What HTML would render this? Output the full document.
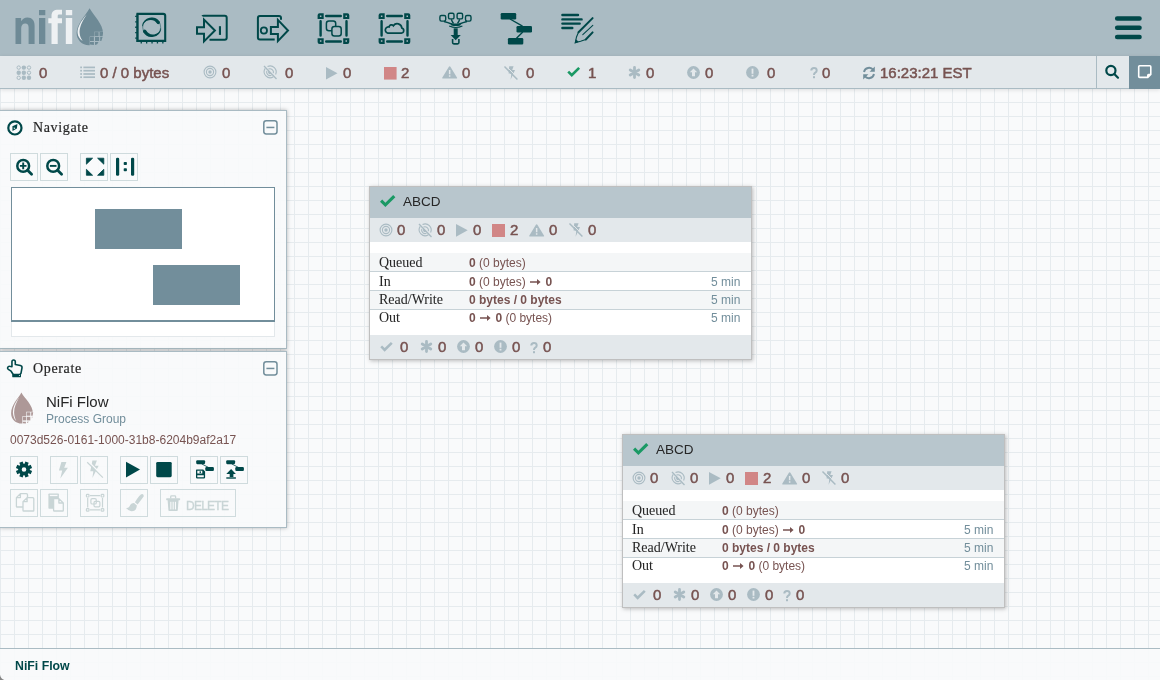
<!DOCTYPE html>
<html><head><meta charset="utf-8"><title>NiFi</title><style>
*{margin:0;padding:0;box-sizing:border-box}
html,body{width:1160px;height:680px;overflow:hidden;background:#f9fafb;font-family:'Liberation Sans', sans-serif}
.t{position:absolute;white-space:nowrap;will-change:transform}
.i{position:absolute;overflow:visible}
#canvas{position:absolute;left:0;top:88px;width:1160px;height:592px;background-color:#f9fafb;
 background-image:linear-gradient(to right,#e6ebee 1px,transparent 1px),linear-gradient(to bottom,#e6ebee 1px,transparent 1px);
 background-size:14px 14px;background-position:0 0}
#header{position:absolute;left:0;top:0;width:1160px;height:56px;background:#aabbc3}
#status{position:absolute;left:0;top:56px;width:1160px;height:33px;background:#e3e8eb;border-bottom:1px solid #aabbc3;box-shadow:0 1px 4px rgba(0,0,0,0.12)}
#srch{position:absolute;left:1096px;top:56px;width:33px;height:32px;border-left:1px solid #aabbc3;background:#e3e8eb}
#note{position:absolute;left:1129px;top:56px;width:31px;height:33px;background:#728e9b}
.panel{position:absolute;left:0;width:287px;background:rgba(249,250,251,0.92);border:1px solid #aabbc3;border-left:none;box-shadow:0 0 4px rgba(0,0,0,0.28)}
.btn{position:absolute;width:28px;height:28px;border:1px solid #cfdbdd;background:transparent}
#birdseye{position:absolute;left:11px;top:187px;width:264px;height:135px;background:#fff;border:1px solid #728e9b;border-bottom-width:2px}
.bk{position:absolute;background:#728e9b}
#bstrip{position:absolute;left:11px;top:322px;width:264px;height:15px;background:#fff;border:1px solid #e3e8eb;border-top:none}
.pg{position:absolute;width:383px;height:174px;background:#fff;border:1px solid rgba(0,0,0,0.25);box-shadow:1px 1px 4px rgba(0,0,0,0.25)}
.pgh{position:absolute;left:0;top:0;width:381px;height:31px;background:#b8c6cd}
.pgs{position:absolute;left:0;top:31px;width:381px;height:24px;background:#e3e8eb}
.row{position:absolute;left:0;width:381px;height:18px;background:#fff}
.rb{position:absolute;left:0;width:381px;height:1px;background:#c7d2d7}
.pgf{position:absolute;left:0;top:148px;width:381px;height:24px;background:#e3e8eb}
#bc{position:absolute;left:0;top:648px;width:1160px;height:32px;background:rgba(249,250,251,0.92);border-top:1px solid #aabbc3}
</style></head>
<body>
<div id="canvas"></div>
<div id="header"></div>
<svg class="i" style="left:0px;top:0px;" width="120" height="56" viewBox="0 0 120 56">
<path fill="#6e8a96" d="M15.5 18h5.6v3.2c1.4-2.3 3.6-3.7 6.3-3.7 4.7 0 7.2 3 7.2 8.2V44h-6V27.6c0-2.8-1.1-4.2-3.4-4.2-2.4 0-4 1.7-4 4.7V44h-5.7z"/>
<rect fill="#6e8a96" x="39" y="10" width="6.3" height="5.2"/>
<rect fill="#6e8a96" x="39" y="18" width="6.3" height="26"/>
<path fill="#eef1f3" d="M51.5 44V23.2h-3.2v-4.9h3.2v-2.4c0-4.4 2.4-6.2 6.8-6.2h3.7v4.9h-2.6c-1.4 0-1.7.6-1.7 1.9v1.8h4.3v4.9h-4.3V44z"/>
<rect fill="#eef1f3" x="65.8" y="10" width="6.4" height="5.2"/>
<rect fill="#eef1f3" x="65.8" y="18" width="6.4" height="26"/>
<clipPath id="dcl"><path clip-rule="evenodd" d="M0 0H120V56H0Z M94.2 31.8V36.6H89.7V47H106V31.8Z"/></clipPath>
<path clip-path="url(#dcl)" fill="#6e8a96" d="M89.6 8.3C85 16 76.6 24.5 76.6 33C76.6 39.8 82 45.2 89 45.2C96 45.2 103 39.8 103 33C103 24.5 94.2 16 89.6 8.3z"/>
<path fill="#eef1f3" d="M86.7 14.4C80.5 21.5 77.2 27.5 77.6 33C77.9 36.5 79.8 39.2 82.6 40.9C80.9 38.6 79.9 36 79.6 33C79.2 28 81.8 21.5 86.7 14.4Z"/>
<g fill="#6e8a96"><rect x="94.5" y="32.1" width="4.1" height="4.1"/><path d="M99.5 32.1H103V33.5L102.6 36.2H99.5Z"/><rect x="90" y="37" width="3.9" height="4"/><rect x="95" y="37" width="4.2" height="4"/><path d="M100.2 37H102.6L101.3 41H100.2Z"/><path d="M90 41.9H93.9V44.9L90 44.6Z"/><path d="M95 41.9H98.5L97.2 44.2L95 45Z"/></g>
</svg>
<svg class="i" style="left:130px;top:8px;" width="45" height="42" viewBox="0 0 45 42"><g fill="none" stroke="#004849">
<path stroke-width="2.1" d="M7.6 5.85 H33.2 a2 2 0 0 1 2 2 V32.85 H7.6 Z"/>
<path stroke-width="1.2" d="M7 5.5 V33.5 H35.5"/>
<path stroke-width="1.6" stroke-dasharray="1.3 4.1" d="M6 7.8 V34 M10.6 34.8 H35"/>
<circle cx="21.7" cy="19.2" r="9.0" stroke-width="0.55" stroke-opacity="0.85"/>
</g><g fill="#004849"><path d="M12.15 17.52 A9.7 9.7 0 0 1 29.65 13.64 L27.05 15.46 A8.0 8.0 0 0 0 12.62 18.66Z"/><circle cx="28.35" cy="14.55" r="1.59"/><path d="M31.25 20.88 A9.7 9.7 0 0 1 13.22 23.90 L16.00 22.36 A8.0 8.0 0 0 0 30.88 19.87Z"/><circle cx="14.61" cy="23.13" r="1.59"/></g></svg>
<svg class="i" style="left:190px;top:8px;" width="45" height="42" viewBox="0 0 45 42"><g fill="none" stroke="#004849" stroke-width="2" stroke-linejoin="miter">
<path d="M12.3 8.2 Q12.6 7.7 14 7.7 H34.7 Q36.7 7.7 36.7 9.7 V29.8 Q36.7 31.8 34.7 31.8 H19.5"/>
<path d="M7 19.2 H14 V11.6 L24.9 22.5 L14 33.4 V25.8 H7 Z"/>
</g><rect fill="#004849" x="28.9" y="18.2" width="2.1" height="8.7"/></svg>
<svg class="i" style="left:250px;top:8px;" width="45" height="42" viewBox="0 0 45 42"><g fill="none" stroke="#004849" stroke-width="2">
<path d="M31 11.7 V10 Q31 8 29 8 H9.9 Q7.9 8 7.9 10 V29.5 Q7.9 31.5 9.9 31.5 H24.7"/>
<circle cx="13.9" cy="22.5" r="3.1" stroke-width="1.8"/>
<path d="M20.9 19 H27.9 V11.9 L38 22.5 L27.9 33.1 V26 H20.9 Z"/>
</g></svg>
<svg class="i" style="left:312px;top:8px;" width="45" height="42" viewBox="0 0 45 42"><g fill="#004849">
<path d="M5.6 7.2 a2 2 0 0 1 2-2 H11.7 V11.1 H5.6 Z M7.9 7.5 v1.5 h1.5 v-1.5 z" fill-rule="evenodd"/>
<path d="M37.3 7.2 a2 2 0 0 0 -2-2 H31.2 V11.1 H37.3 Z M35 7.5 v1.5 h-1.5 v-1.5 z" fill-rule="evenodd"/>
<path d="M5.6 34.1 a2 2 0 0 0 2 2 H11.7 V30.2 H5.6 Z M7.9 32.3 v1.5 h1.5 v-1.5 z" fill-rule="evenodd"/>
<path d="M37.3 34.1 a2 2 0 0 1 -2 2 H31.2 V30.2 H37.3 Z M35 32.3 v1.5 h-1.5 v-1.5 z" fill-rule="evenodd"/>
</g><g stroke="#004849" stroke-width="2.4" stroke-linecap="round">
<path d="M14.2 8 H28.8 M14.2 33.5 H28.8 M8.6 13.2 V27.6 M34.5 13.2 V27.6"/></g><g fill="none" stroke="#004849" stroke-width="1.5">
<path d="M23.7 18.6 V15.6 a2.5 2.5 0 0 0 -2.5 -2.5 H16.9 a2.5 2.5 0 0 0 -2.5 2.5 V20.3 a2.5 2.5 0 0 0 2.5 2.5 H19.9"/>
<rect x="19.9" y="18.6" width="9.3" height="9.4" rx="2.5"/></g></svg>
<svg class="i" style="left:373px;top:8px;" width="45" height="42" viewBox="0 0 45 42"><g fill="#004849">
<path d="M5.6 7.2 a2 2 0 0 1 2-2 H11.7 V11.1 H5.6 Z M7.9 7.5 v1.5 h1.5 v-1.5 z" fill-rule="evenodd"/>
<path d="M37.3 7.2 a2 2 0 0 0 -2-2 H31.2 V11.1 H37.3 Z M35 7.5 v1.5 h-1.5 v-1.5 z" fill-rule="evenodd"/>
<path d="M5.6 34.1 a2 2 0 0 0 2 2 H11.7 V30.2 H5.6 Z M7.9 32.3 v1.5 h1.5 v-1.5 z" fill-rule="evenodd"/>
<path d="M37.3 34.1 a2 2 0 0 1 -2 2 H31.2 V30.2 H37.3 Z M35 32.3 v1.5 h-1.5 v-1.5 z" fill-rule="evenodd"/>
</g><g stroke="#004849" stroke-width="2.4" stroke-linecap="round">
<path d="M14.2 8 H28.8 M14.2 33.5 H28.8 M8.6 13.2 V27.6 M34.5 13.2 V27.6"/></g><path fill="none" stroke="#004849" stroke-width="1.7" d="M14.8 25.1 H28.4 a2.6 2.6 0 0 0 .4 -5.1 a4.6 4.6 0 0 0 -8.4 -2.2 a2.4 2.4 0 0 0 -4.3 1.2 a3.1 3.1 0 0 0 -1.3 6.1 z"/></svg>
<svg class="i" style="left:433px;top:8px;" width="45" height="42" viewBox="0 0 45 42"><g fill="none" stroke="#004849" stroke-width="1.4">
<rect x="6.9" y="7.5" width="5.8" height="5.6" rx="1.5"/>
<rect x="15.5" y="5.3" width="5.5" height="5.6" rx="1.5"/>
<rect x="24.1" y="5.3" width="5.5" height="5.6" rx="1.5"/>
<rect x="32.5" y="7.5" width="5.5" height="5.6" rx="1.5"/>
<path d="M11 13.5 Q15 14.5 18.5 16 M18.3 11.3 Q19 13.5 20.5 15.5 M26.7 11.3 Q26 13.5 24.5 15.5 M34 13.5 Q30 14.5 26.5 16"/>
<path d="M16.2 18 Q22.8 21 29.4 18" stroke-width="1.2"/>
<path d="M19.6 30.9 V34.6 Q19.6 35.9 20.9 35.9 H24.6 Q25.9 35.9 25.9 34.6 V30.9" stroke-width="1.6"/>
</g><g fill="#004849">
<path d="M17.4 14.9 Q22.8 16 28.2 14.9 L27.4 17.6 Q22.8 18.6 18.3 17.6 Z"/>
<rect x="20.7" y="20.3" width="4" height="7"/>
<path d="M17.6 26.9 H27.8 L22.7 32.3 Z"/></g></svg>
<svg class="i" style="left:494px;top:8px;" width="45" height="42" viewBox="0 0 45 42"><g fill="#004849">
<rect x="6.7" y="4.9" width="15.5" height="6.7" rx="1.3"/>
<rect x="22.5" y="17.9" width="15.5" height="6.7" rx="1.3"/>
<rect x="13.9" y="29.9" width="15.4" height="6.7" rx="1.3"/></g>
<path stroke="#004849" stroke-width="1.4" d="M16 11 L28.5 18.2 M28.8 24 L22.5 30.2"/></svg>
<svg class="i" style="left:555px;top:8px;" width="45" height="42" viewBox="0 0 45 42"><g stroke="#004849" stroke-width="2.4" stroke-linecap="round">
<path d="M7.4 7 H23 M7.4 11.4 H26.6 M7.4 15.6 H24.7 M7.4 20 H17.3"/></g>
<g fill="none" stroke="#004849" stroke-linecap="round">
<path stroke-width="2" d="M23.5 24.3 L37.6 10.1"/>
<path stroke-width="1.1" d="M27.8 26.7 L37.8 17.3"/>
<path stroke-width="2" d="M30.8 31.5 L37.6 24.4"/>
<path stroke-width="1.1" d="M23.5 24.3 L21.5 29 L20.3 34.7 L25.6 33.2 L30.8 31.5"/></g>
<path fill="#004849" d="M19.6 35.5 L20.8 31.3 L23.8 33.8 Z"/></svg>
<svg class="i" style="left:1110px;top:10px;" width="36" height="36" viewBox="0 0 36 36"><g stroke="#004849" stroke-width="4.6" stroke-linecap="round"><path d="M7.2 8.5 H29.5 M7.2 17.8 H29.5 M7.2 27 H29.5"/></g></svg>
<div id="status"></div>
<div id="srch"></div><div id="note"></div>
<svg class="i" style="left:1100px;top:62px;" width="24" height="20" viewBox="0 0 24 20"><g fill="none" stroke="#004849" stroke-width="2.2" stroke-linecap="round"><circle cx="10.9" cy="8.5" r="4.6"/><path d="M14.3 12 L18 15.7"/></g></svg>
<svg class="i" style="left:1134px;top:62px;" width="24" height="20" viewBox="0 0 24 20"><path fill="none" stroke="#fff" stroke-width="1.6" d="M5.7 3.8 H15.8 a1 1 0 0 1 1 1 V12.5 L13.8 15.4 H5.7 a1 1 0 0 1 -1 -1 V4.8 a1 1 0 0 1 1 -1 z M13.8 15.4 V13.2 a.7 .7 0 0 1 .7 -.7 H16.8"/></svg>
<svg class="i" style="left:12px;top:60px;" width="24" height="24" viewBox="0 0 24 24"><circle cx="6.7" cy="7.6" r="1.7" fill="none" stroke="#aabbc3" stroke-width="1"/><circle cx="11.850000000000001" cy="7.6" r="2.2" fill="#aabbc3"/><circle cx="17.0" cy="7.6" r="1.7" fill="none" stroke="#aabbc3" stroke-width="1"/><circle cx="6.7" cy="12.7" r="2.2" fill="#aabbc3"/><circle cx="11.850000000000001" cy="12.7" r="2.2" fill="#aabbc3"/><circle cx="17.0" cy="12.7" r="1.7" fill="none" stroke="#aabbc3" stroke-width="1"/><circle cx="6.7" cy="17.799999999999997" r="1.7" fill="none" stroke="#aabbc3" stroke-width="1"/><circle cx="11.850000000000001" cy="17.799999999999997" r="2.2" fill="#aabbc3"/><circle cx="17.0" cy="17.799999999999997" r="2.2" fill="#aabbc3"/></svg>
<div class="t" style="left:39.30px;top:65px;font-size:15px;line-height:15px;color:#775351;font-family:'Liberation Sans', sans-serif;font-weight:normal;-webkit-text-stroke:0.5px #775351;">0</div>
<svg class="i" style="left:74px;top:60px;" width="24" height="24" viewBox="0 0 24 24"><g fill="#aabbc3"><rect x="6.2" y="6.550000000000001" width="1.8" height="1.7"/><rect x="9.4" y="6.550000000000001" width="11.6" height="1.7"/><rect x="6.2" y="9.85" width="1.8" height="1.7"/><rect x="9.4" y="9.85" width="11.6" height="1.7"/><rect x="6.2" y="13.15" width="1.8" height="1.7"/><rect x="9.4" y="13.15" width="11.6" height="1.7"/><rect x="6.2" y="16.349999999999998" width="1.8" height="1.7"/><rect x="9.4" y="16.349999999999998" width="11.6" height="1.7"/></g></svg>
<div class="t" style="left:100.30px;top:65px;font-size:15px;line-height:15px;color:#775351;font-family:'Liberation Sans', sans-serif;font-weight:normal;-webkit-text-stroke:0.5px #775351;">0 / 0 bytes</div>
<svg class="i" style="left:198.0px;top:60.0px;" width="24.0" height="24.0" viewBox="0 0 24 24"><g fill="none" stroke="#aabbc3" stroke-width="1.1"><circle cx="12" cy="12" r="5.9"/><circle cx="12" cy="12" r="3.6"/></g><circle cx="12" cy="12" r="1.7" fill="#aabbc3"/></svg>
<div class="t" style="left:221.60px;top:65px;font-size:15px;line-height:15px;color:#775351;font-family:'Liberation Sans', sans-serif;font-weight:normal;-webkit-text-stroke:0.5px #775351;">0</div>
<svg class="i" style="left:258.0px;top:60.0px;" width="24.0" height="24.0" viewBox="0 0 24 24"><g fill="none" stroke="#aabbc3" stroke-width="1.1"><path d="M9.5 6.6 A6 6 0 0 1 17.6 14.5 M15.4 16.8 A6 6 0 0 1 7.2 8.4"/><path d="M10.5 9 A3.6 3.6 0 0 1 15.4 13.1 M13.5 15.3 A3.6 3.6 0 0 1 8.8 10.8"/><path d="M6 6 L18.5 19" stroke-width="1.3"/></g><path d="M10.6 10.8 L13.2 13.5 A1.7 1.7 0 0 1 10.6 10.8z" fill="#aabbc3"/></svg>
<div class="t" style="left:285.30px;top:65px;font-size:15px;line-height:15px;color:#775351;font-family:'Liberation Sans', sans-serif;font-weight:normal;-webkit-text-stroke:0.5px #775351;">0</div>
<svg class="i" style="left:326px;top:66.8px;" width="11.5" height="12.4" viewBox="0 0 11.5 12.4"><path fill="#aabbc3" d="M0 0 L11.5 6.2 L0 12.4 Z"/></svg>
<div class="t" style="left:342.90px;top:65px;font-size:15px;line-height:15px;color:#775351;font-family:'Liberation Sans', sans-serif;font-weight:normal;-webkit-text-stroke:0.5px #775351;">0</div>
<svg class="i" style="left:383.9px;top:66.7px;" width="12.6" height="12.6" viewBox="0 0 12.6 12.6"><rect fill="#d18686" width="12.6" height="12.6" rx="0"/></svg>
<div class="t" style="left:400.90px;top:65px;font-size:15px;line-height:15px;color:#775351;font-family:'Liberation Sans', sans-serif;font-weight:normal;-webkit-text-stroke:0.5px #775351;">2</div>
<svg class="i" style="left:442px;top:66.4px;" width="16" height="13" viewBox="0 0 16 13"><path fill="#aabbc3" d="M7.65 0.3 Q8.1 0.3 8.4 0.8 L15.1 11.8 Q15.4 12.5 14.6 12.5 H0.7 Q-0.1 12.5 0.2 11.8 L6.9 0.8 Q7.2 0.3 7.65 0.3Z M6.9 4 V8.2 H8.4 V4Z M6.9 9.3 V10.8 H8.4 V9.3Z" fill-rule="evenodd"/></svg>
<div class="t" style="left:462.10px;top:65px;font-size:15px;line-height:15px;color:#775351;font-family:'Liberation Sans', sans-serif;font-weight:normal;-webkit-text-stroke:0.5px #775351;">0</div>
<svg class="i" style="left:504px;top:65.8px;" width="14" height="14" viewBox="0 0 14 14"><path fill="#aabbc3" d="M5.2 0.3 H9.6 L8.2 4 H11 L6.6 13.7 L7.4 7.5 H4.6 Z"/><path stroke="#aabbc3" stroke-width="1.2" d="M0.6 0.6 L13.3 13.4"/><path stroke="#e3e8eb" stroke-width="1" d="M1.5 -0.5 L14.2 12.3"/><path stroke="#aabbc3" stroke-width="1.2" d="M0.6 0.6 L13.3 13.4"/></svg>
<div class="t" style="left:526.20px;top:65px;font-size:15px;line-height:15px;color:#775351;font-family:'Liberation Sans', sans-serif;font-weight:normal;-webkit-text-stroke:0.5px #775351;">0</div>
<svg class="i" style="left:567.3px;top:67.4px;overflow:visible" width="13.4" height="10" viewBox="0 0 16 12.5"><path fill="#1a9964" d="M0 6.9 L2.3 4.6 L5.6 7.9 L13.7 0 L16 2.3 L5.6 12.5 Z"/></svg>
<div class="t" style="left:587.70px;top:65px;font-size:15px;line-height:15px;color:#775351;font-family:'Liberation Sans', sans-serif;font-weight:normal;-webkit-text-stroke:0.5px #775351;">1</div>
<svg class="i" style="left:628px;top:66.4px;" width="13" height="13" viewBox="0 0 13 13"><g stroke="#aabbc3" stroke-width="2.8" stroke-linecap="round"><path d="M6.5 1.5 V11.5 M2.2 4 L10.8 9 M2.2 9 L10.8 4"/></g></svg>
<div class="t" style="left:646.20px;top:65px;font-size:15px;line-height:15px;color:#775351;font-family:'Liberation Sans', sans-serif;font-weight:normal;-webkit-text-stroke:0.5px #775351;">0</div>
<svg class="i" style="left:687.2px;top:66.2px;" width="13" height="13" viewBox="0 0 13 13"><circle cx="6.5" cy="6.5" r="6.4" fill="#aabbc3"/><path fill="#e3e8eb" d="M6.5 2.6 L10.2 6.3 H8 V10.3 H5 V6.3 H2.8 Z"/></svg>
<div class="t" style="left:705.00px;top:65px;font-size:15px;line-height:15px;color:#775351;font-family:'Liberation Sans', sans-serif;font-weight:normal;-webkit-text-stroke:0.5px #775351;">0</div>
<svg class="i" style="left:746px;top:66.2px;" width="13" height="13" viewBox="0 0 13 13"><circle cx="6.5" cy="6.5" r="6.4" fill="#aabbc3"/><rect x="5.6" y="2.6" width="1.8" height="5.2" fill="#e3e8eb"/><rect x="5.6" y="8.8" width="1.8" height="1.7" fill="#e3e8eb"/></svg>
<div class="t" style="left:767.30px;top:65px;font-size:15px;line-height:15px;color:#775351;font-family:'Liberation Sans', sans-serif;font-weight:normal;-webkit-text-stroke:0.5px #775351;">0</div>
<svg class="i" style="left:809.5px;top:66.6px;" width="8" height="12" viewBox="0 0 8 12"><path fill="none" stroke="#aabbc3" stroke-width="2" d="M1.3 3.6 Q1.3 1 4 1 Q6.7 1 6.7 3.4 Q6.7 4.9 5.3 5.7 Q4 6.5 4 8"/><rect x="3" y="9.2" width="2" height="2" fill="#aabbc3"/></svg>
<div class="t" style="left:821.90px;top:65px;font-size:15px;line-height:15px;color:#775351;font-family:'Liberation Sans', sans-serif;font-weight:normal;-webkit-text-stroke:0.5px #775351;">0</div>
<svg class="i" style="left:862.2px;top:65.7px;" width="14" height="14" viewBox="0 0 14 14"><g fill="none" stroke="#728e9b" stroke-width="1.9"><path d="M2 6 A5.2 5.2 0 0 1 11.3 4"/><path d="M12 8 A5.2 5.2 0 0 1 2.7 10"/></g><path fill="#728e9b" d="M12.8 0.6 V5.8 H7.6Z M1.2 13.4 V8.2 H6.4Z"/></svg>
<div class="t" style="left:880.40px;top:65px;font-size:15px;line-height:15px;color:#775351;font-family:'Liberation Sans', sans-serif;font-weight:normal;-webkit-text-stroke:0.5px #775351;">16:23:21 EST</div>
<div class="panel" style="top:110px;height:239px"></div>
<svg class="i" style="left:6px;top:119px;" width="18" height="18" viewBox="0 0 18 18"><circle cx="8.9" cy="8.9" r="6.6" fill="none" stroke="#004849" stroke-width="2.2"/><path fill="#004849" d="M6.4 7.2 L11.4 5.1 L10.9 9.5 L6.5 12 Z"/><path fill="#f9fafb" d="M7.8 8.3 L9.4 9.3 L7.8 10.2Z"/></svg>
<div class="t" style="left:33.00px;top:121px;font-size:14px;line-height:14px;color:#262626;font-family:'Liberation Serif', serif;font-weight:normal;letter-spacing:0.65px;-webkit-text-stroke:0.2px #262626;">Navigate</div>
<svg class="i" style="left:262.5px;top:119.8px;" width="15" height="15" viewBox="0 0 15 15"><rect x="0.8" y="0.8" width="13.2" height="13.2" rx="2.4" fill="none" stroke="#728e9b" stroke-width="1.5"/><rect x="3.4" y="6.7" width="8" height="1.5" fill="#728e9b"/></svg>
<div class="btn" style="left:10px;top:153px"></div>
<div class="btn" style="left:40px;top:153px"></div>
<div class="btn" style="left:80px;top:153px"></div>
<div class="btn" style="left:110px;top:153px"></div>
<svg class="i" style="left:10px;top:153px;" width="28" height="28" viewBox="0 0 28 28"><g fill="none" stroke="#004849" stroke-width="2.5"><circle cx="13.2" cy="12.9" r="5.9"/><path d="M17.6 17.3 L21.6 21.3" stroke-linecap="round" stroke-width="2.8"/></g><path stroke="#004849" stroke-width="1.9" d="M13.2 9.6 V16.2 M9.9 12.9 H16.5"/></svg>
<svg class="i" style="left:40px;top:153px;" width="28" height="28" viewBox="0 0 28 28"><g fill="none" stroke="#004849" stroke-width="2.5"><circle cx="13.2" cy="12.9" r="5.9"/><path d="M17.6 17.3 L21.6 21.3" stroke-linecap="round" stroke-width="2.8"/></g><path stroke="#004849" stroke-width="1.9" d="M9.9 12.9 H16.5"/></svg>
<svg class="i" style="left:80px;top:153px;" width="28" height="28" viewBox="0 0 28 28"><g fill="#004849" stroke="#004849" stroke-width="0.8" stroke-linejoin="round"><path d="M6.4 5.2 H12.6 L6.4 11.2Z M23.8 5.2 H17.6 L23.8 11.2Z M6.4 22.3 H12.6 L6.4 16.3Z M23.8 22.3 H17.6 L23.8 16.3Z"/></g></svg>
<svg class="i" style="left:110px;top:153px;" width="28" height="28" viewBox="0 0 28 28"><g fill="#004849"><rect x="6" y="4.7" width="3.2" height="18" rx="1.3"/><rect x="21" y="4.7" width="3.2" height="18" rx="1.3"/><rect x="13.7" y="9" width="3.2" height="3" rx="0.8"/><rect x="13.7" y="15.3" width="3.2" height="3" rx="0.8"/></g></svg>
<div id="birdseye"><div class="bk" style="left:83px;top:21px;width:87px;height:40px"></div><div class="bk" style="left:141px;top:77px;width:87px;height:40px"></div></div>
<div id="bstrip"></div>
<div class="panel" style="top:351px;height:177px"></div>
<svg class="i" style="left:5px;top:358px;" width="20" height="20" viewBox="0 0 20 20"><path fill="none" stroke="#004849" stroke-width="1.6" stroke-linejoin="round" stroke-linecap="round" d="M6.95 8.6 V3.8 Q6.95 2.06 8.6 2.06 Q10.3 2.06 10.3 3.8 V6.5 L15.4 7.5 Q17.2 7.9 17 9.8 L16 15.2 L15.4 16 M7.9 16 L6.1 13.2 L3.3 11.4 Q2.2 10.5 2.7 9.4 Q3.4 8.1 4.6 8.3 L6.95 8.6"/><rect x="7.2" y="15.8" width="8.8" height="3.5" rx="0.9" fill="#004849"/><circle cx="14.4" cy="17.5" r="0.55" fill="#f9fafb"/></svg>
<div class="t" style="left:33.00px;top:362px;font-size:14px;line-height:14px;color:#262626;font-family:'Liberation Serif', serif;font-weight:normal;letter-spacing:0.65px;-webkit-text-stroke:0.2px #262626;">Operate</div>
<svg class="i" style="left:262.5px;top:360.6px;" width="15" height="15" viewBox="0 0 15 15"><rect x="0.8" y="0.8" width="13.2" height="13.2" rx="2.4" fill="none" stroke="#728e9b" stroke-width="1.5"/><rect x="3.4" y="6.7" width="8" height="1.5" fill="#728e9b"/></svg>
<svg class="i" style="left:10px;top:392px;" width="26" height="34" viewBox="0 0 26 34"><clipPath id="dcl2"><path clip-rule="evenodd" d="M-5 -5H40V40H-5Z M16.2 19.8V24.3H12.3V40H40V19.8Z"/></clipPath><path clip-path="url(#dcl2)" fill="#ad9897" d="M11.4 0.5 C8.5 6 1.1 13 1.1 21.2 C1.1 27.2 5.8 31.6 11.8 31.6 C17.8 31.6 22.9 27.2 22.9 21.2 C22.9 13 14.3 6 11.4 0.5z"/><path fill="#f9fafb" d="M9.2 5.3 C5.5 10.3 2.7 15.3 2.9 20.4 C3.1 24.4 4.6 27.3 6.4 29.3 C5.2 27 4.2 24.2 4.1 20.6 C4 15.6 6.3 10.6 9.2 5.3Z"/><g fill="#ad9897"><rect x="16.7" y="20.3" width="3.6" height="3.4"/><path d="M21.2 20.3 H23.2 L22.6 23.7 H21.2Z"/><rect x="12.8" y="24.8" width="3.2" height="3.6"/><rect x="16.7" y="24.8" width="3.6" height="3.6"/><path d="M21.9 24.8 H22.5 L21.9 26.6Z"/><path d="M12.8 29.8 H15.9 V31.5 L12.8 31.2Z"/><path d="M17 29.8 H19 L17 31Z"/></g></svg>
<div class="t" style="left:46.20px;top:394px;font-size:15px;line-height:15px;color:#262626;font-family:'Liberation Sans', sans-serif;font-weight:normal;">NiFi Flow</div>
<div class="t" style="left:46.20px;top:413px;font-size:12px;line-height:12px;color:#728e9b;font-family:'Liberation Sans', sans-serif;font-weight:normal;">Process Group</div>
<div class="t" style="left:10.30px;top:434px;font-size:12px;line-height:12px;color:#775351;font-family:'Liberation Sans', sans-serif;font-weight:normal;">0073d526-0161-1000-31b8-6204b9af2a17</div>
<div class="btn" style="left:10px;top:456px"></div>
<div class="btn" style="left:50px;top:456px"></div>
<div class="btn" style="left:80px;top:456px"></div>
<div class="btn" style="left:120px;top:456px"></div>
<div class="btn" style="left:150px;top:456px"></div>
<div class="btn" style="left:190px;top:456px"></div>
<div class="btn" style="left:220px;top:456px"></div>
<div class="btn" style="left:10px;top:489px"></div>
<div class="btn" style="left:40px;top:489px"></div>
<div class="btn" style="left:80px;top:489px"></div>
<div class="btn" style="left:120px;top:489px"></div>
<div class="btn" style="left:160px;top:489px;width:76px"></div>
<svg class="i" style="left:10px;top:456px;" width="28" height="28" viewBox="0 0 28 28"><path fill="#004849" fill-rule="evenodd" d="M19.87 14.05 L22.08 14.91 L20.71 18.22 L18.54 17.27 L17.77 18.04 L18.72 20.21 L15.41 21.58 L14.55 19.37 L13.45 19.37 L12.59 21.58 L9.28 20.21 L10.23 18.04 L9.46 17.27 L7.29 18.22 L5.92 14.91 L8.13 14.05 L8.13 12.95 L5.92 12.09 L7.29 8.78 L9.46 9.73 L10.23 8.96 L9.28 6.79 L12.59 5.42 L13.45 7.63 L14.55 7.63 L15.41 5.42 L18.72 6.79 L17.77 8.96 L18.54 9.73 L20.71 8.78 L22.08 12.09 L19.87 12.95Z M16.3 13.5 A2.3 2.3 0 1 0 11.7 13.5 A2.3 2.3 0 1 0 16.3 13.5Z"/></svg>
<svg class="i" style="left:50px;top:456px;" width="28" height="28" viewBox="0 0 28 28"><path fill="#c9d5d6" d="M11.4 5.9 H16.4 L14.2 11.8 H17.9 L10.3 22.6 L12.2 14.6 H8.9 Z"/></svg>
<svg class="i" style="left:80px;top:456px;" width="28" height="28" viewBox="0 0 28 28"><path fill="#c9d5d6" d="M12.4 4.5 H16.9 L14.9 9.7 H18.6 L12.4 22 L13.3 15.3 H10.3 Z"/><path stroke="#f9fafb" stroke-width="1.4" d="M8.4 5.4 L23.6 20.8"/><path stroke="#c9d5d6" stroke-width="1.2" d="M7.2 6.3 L22.9 21.6"/></svg>
<svg class="i" style="left:120px;top:456px;" width="28" height="28" viewBox="0 0 28 28"><path fill="#004849" d="M6 5.7 L20 13.6 L6 21.5 Z"/></svg>
<svg class="i" style="left:150px;top:456px;" width="28" height="28" viewBox="0 0 28 28"><rect x="6.2" y="5.9" width="15.5" height="15.3" rx="1.4" fill="#004849"/></svg>
<svg class="i" style="left:190px;top:456px;" width="28" height="28" viewBox="0 0 28 28"><g fill="#004849"><rect x="6.2" y="4.2" width="8.9" height="4" rx="1.1"/><rect x="15.3" y="11.1" width="8.6" height="4" rx="1.1"/></g><path stroke="#004849" stroke-width="0.8" d="M11.8 8 L18.5 11.4"/><path fill="#004849" fill-rule="evenodd" d="M6.6 13.6 H13.2 L15.1 15.5 V21.6 Q15.1 22.4 14.3 22.4 H6.8 Q6 22.4 6 21.6 V14.2 Q6 13.6 6.6 13.6Z M7.3 14.8 V17.6 H12.3 V14.8Z M7.3 19.2 V21.3 H13.8 V19.2Z"/><rect x="9.6" y="15.3" width="1.3" height="1.8" fill="#004849"/></svg>
<svg class="i" style="left:220px;top:456px;" width="28" height="28" viewBox="0 0 28 28"><g fill="#004849"><rect x="6.2" y="4.2" width="8.9" height="4" rx="1.1"/><rect x="15.3" y="11.1" width="8.6" height="4" rx="1.1"/></g><path stroke="#004849" stroke-width="0.8" d="M11.8 8 L18.5 11.4"/><g fill="#004849"><path d="M11.1 13.1 L15.9 17.9 H13.4 V21 H9.7 V17.9 H6.3Z"/><rect x="6.3" y="21.3" width="9.6" height="1.4"/></g></svg>
<svg class="i" style="left:10px;top:489px;" width="28" height="28" viewBox="0 0 28 28"><g fill="#f9fafb" stroke="#c9d5d6" stroke-width="1.3" stroke-linejoin="round"><path d="M6.4 17.4 V8.6 L10.4 4.6 H16.4 Q17.5 4.6 17.5 5.7 V17.4 Q17.5 18 16.9 18 H7 Q6.4 18 6.4 17.4Z M6.4 8.6 H10.4 V4.6"/><path d="M13 21.4 V12.7 L17.1 8.6 H22.7 Q23.8 8.6 23.8 9.7 V21.4 Q23.8 22 23.2 22 H13.6 Q13 22 13 21.4Z M13 12.7 H17.1 V8.6"/></g></svg>
<svg class="i" style="left:40px;top:489px;" width="28" height="28" viewBox="0 0 28 28"><rect x="8.4" y="4.5" width="10.5" height="15.3" rx="0.8" fill="#c9d5d6"/><rect x="9.8" y="5.8" width="7.7" height="1.3" fill="#f9fafb"/><path fill="#f9fafb" stroke="#c9d5d6" stroke-width="1.3" stroke-linejoin="round" d="M13.6 9.6 H18.9 L23.3 14 V21.4 Q23.3 22 22.7 22 H14.2 Q13.6 22 13.6 21.4Z M18.9 9.6 V14 H23.3"/></svg>
<svg class="i" style="left:80px;top:489px;" width="28" height="28" viewBox="0 0 28 28"><g fill="none" stroke="#c9d5d6" stroke-width="1.2"><rect x="6.4" y="5.4" width="2.6" height="2.6" rx="0.8"/><rect x="21.2" y="5.4" width="2.6" height="2.6" rx="0.8"/><rect x="6.4" y="19.6" width="2.6" height="2.6" rx="0.8"/><rect x="21.2" y="19.6" width="2.6" height="2.6" rx="0.8"/><path d="M10 6.7 H20.2 M10 20.9 H20.2 M7.7 9 V18.6 M22.5 9 V18.6"/><rect x="10.9" y="9.6" width="5.4" height="5.4" rx="1.3"/><rect x="14" y="12.4" width="5.9" height="5.4" rx="1.3"/></g></svg>
<svg class="i" style="left:120px;top:489px;" width="28" height="28" viewBox="0 0 28 28"><path fill="#c9d5d6" d="M22.4 5.1 Q24.3 5.8 23.5 7.8 L17.6 15.6 L14.9 13.3 Q20.5 4.3 22.4 5.1z M14.1 14.1 L16.9 16.5 Q16.5 22.4 11.3 22.2 Q8.2 22 6.2 18.9 Q8.6 19.3 9.6 17.3 Q11 14 14.1 14.1z"/></svg>
<svg class="i" style="left:164px;top:491px;" width="18" height="24" viewBox="0 0 18 24"><g fill="#c9d5d6"><path d="M3.6 9.1 H14.6 L13.8 19.2 Q13.7 20 12.9 20 H5.3 Q4.5 20 4.4 19.2 Z"/><rect x="2.2" y="7.3" width="13.9" height="1.9" rx="0.4"/></g><path fill="none" stroke="#c9d5d6" stroke-width="1.3" d="M6.7 7.6 V5.7 Q6.7 4.9 7.5 4.9 H10.8 Q11.6 4.9 11.6 5.7 V7.6"/><g fill="#f9fafb"><rect x="6.3" y="10.8" width="1.1" height="7.6"/><rect x="8.6" y="10.8" width="1.1" height="7.6"/><rect x="10.9" y="10.8" width="1.1" height="7.6"/></g></svg>
<div class="t" style="left:185.60px;top:500px;font-size:12px;line-height:12px;color:#c9d5d6;font-family:'Liberation Sans', sans-serif;font-weight:normal;letter-spacing:-0.75px;-webkit-text-stroke:0.35px #c9d5d6;">DELETE</div>
<div class="pg" style="left:369px;top:186px"><div class="pgh"></div><div class="pgs"></div><div class="row" style="top:66px;background:#f4f6f7"></div><div class="rb" style="top:84px"></div><div class="row" style="top:85px"></div><div class="rb" style="top:103px"></div><div class="row" style="top:104px;background:#f4f6f7"></div><div class="rb" style="top:122px"></div><div class="pgf"></div></div><svg class="i" style="left:380.3px;top:195px;overflow:visible" width="15.4" height="12.2" viewBox="0 0 16 12.5"><path fill="#1a9964" d="M0 6.9 L2.3 4.6 L5.6 7.9 L13.7 0 L16 2.3 L5.6 12.5 Z"/></svg><div class="t" style="left:402.50px;top:195px;font-size:13.5px;line-height:13.5px;color:#262626;font-family:'Liberation Sans', sans-serif;font-weight:normal;">ABCD</div><svg class="i" style="left:373.9px;top:218.3px;" width="24.0" height="24.0" viewBox="0 0 24 24"><g fill="none" stroke="#aabbc3" stroke-width="1.1"><circle cx="12" cy="12" r="5.9"/><circle cx="12" cy="12" r="3.6"/></g><circle cx="12" cy="12" r="1.7" fill="#aabbc3"/></svg><div class="t" style="left:397.30px;top:222px;font-size:15px;line-height:15px;color:#775351;font-family:'Liberation Sans', sans-serif;font-weight:normal;-webkit-text-stroke:0.5px #775351;">0</div><svg class="i" style="left:412.7px;top:218.3px;" width="24.0" height="24.0" viewBox="0 0 24 24"><g fill="none" stroke="#aabbc3" stroke-width="1.1"><path d="M9.5 6.6 A6 6 0 0 1 17.6 14.5 M15.4 16.8 A6 6 0 0 1 7.2 8.4"/><path d="M10.5 9 A3.6 3.6 0 0 1 15.4 13.1 M13.5 15.3 A3.6 3.6 0 0 1 8.8 10.8"/><path d="M6 6 L18.5 19" stroke-width="1.3"/></g><path d="M10.6 10.8 L13.2 13.5 A1.7 1.7 0 0 1 10.6 10.8z" fill="#aabbc3"/></svg><div class="t" style="left:436.50px;top:222px;font-size:15px;line-height:15px;color:#775351;font-family:'Liberation Sans', sans-serif;font-weight:normal;-webkit-text-stroke:0.5px #775351;">0</div><svg class="i" style="left:455.9px;top:223.9px;" width="11.7" height="12.7" viewBox="0 0 11.7 12.7"><path fill="#aabbc3" d="M0 0 L11.7 6.35 L0 12.7 Z"/></svg><div class="t" style="left:472.70px;top:222px;font-size:15px;line-height:15px;color:#775351;font-family:'Liberation Sans', sans-serif;font-weight:normal;-webkit-text-stroke:0.5px #775351;">0</div><svg class="i" style="left:492px;top:223.9px;" width="13" height="13" viewBox="0 0 13 13"><rect fill="#d18686" width="13" height="13" rx="0"/></svg><div class="t" style="left:509.60px;top:222px;font-size:15px;line-height:15px;color:#775351;font-family:'Liberation Sans', sans-serif;font-weight:normal;-webkit-text-stroke:0.5px #775351;">2</div><svg class="i" style="left:529px;top:223.6px;" width="16" height="13" viewBox="0 0 16 13"><path fill="#aabbc3" d="M7.65 0.3 Q8.1 0.3 8.4 0.8 L15.1 11.8 Q15.4 12.5 14.6 12.5 H0.7 Q-0.1 12.5 0.2 11.8 L6.9 0.8 Q7.2 0.3 7.65 0.3Z M6.9 4 V8.2 H8.4 V4Z M6.9 9.3 V10.8 H8.4 V9.3Z" fill-rule="evenodd"/></svg><div class="t" style="left:549.00px;top:222px;font-size:15px;line-height:15px;color:#775351;font-family:'Liberation Sans', sans-serif;font-weight:normal;-webkit-text-stroke:0.5px #775351;">0</div><svg class="i" style="left:569.2px;top:223.2px;" width="14" height="14" viewBox="0 0 14 14"><path fill="#aabbc3" d="M5.2 0.3 H9.6 L8.2 4 H11 L6.6 13.7 L7.4 7.5 H4.6 Z"/><path stroke="#aabbc3" stroke-width="1.2" d="M0.6 0.6 L13.3 13.4"/><path stroke="#e3e8eb" stroke-width="1" d="M1.5 -0.5 L14.2 12.3"/><path stroke="#aabbc3" stroke-width="1.2" d="M0.6 0.6 L13.3 13.4"/></svg><div class="t" style="left:588.30px;top:222px;font-size:15px;line-height:15px;color:#775351;font-family:'Liberation Sans', sans-serif;font-weight:normal;-webkit-text-stroke:0.5px #775351;">0</div><div class="t" style="left:379.30px;top:256px;font-size:14px;line-height:14px;color:#262626;font-family:'Liberation Serif', serif;font-weight:normal;-webkit-text-stroke:0.05px #262626;">Queued</div><div class="t" style="left:379.30px;top:275px;font-size:14px;line-height:14px;color:#262626;font-family:'Liberation Serif', serif;font-weight:normal;-webkit-text-stroke:0.05px #262626;">In</div><div class="t" style="left:379.30px;top:293px;font-size:14px;line-height:14px;color:#262626;font-family:'Liberation Serif', serif;font-weight:normal;-webkit-text-stroke:0.05px #262626;">Read/Write</div><div class="t" style="left:379.30px;top:311px;font-size:14px;line-height:14px;color:#262626;font-family:'Liberation Serif', serif;font-weight:normal;-webkit-text-stroke:0.05px #262626;">Out</div><div class="t" style="left:468.60px;top:257px;font-size:12px;line-height:12px;color:#775351;font-family:'Liberation Sans', sans-serif;font-weight:normal;"><b>0</b> (0 bytes)</div><div class="t" style="left:468.60px;top:276px;font-size:12px;line-height:12px;color:#775351;font-family:'Liberation Sans', sans-serif;font-weight:normal;"><b>0</b> (0 bytes) <svg width="11" height="8" viewBox="0 0 11 8" style="display:inline-block;vertical-align:0px;margin:0 1px"><path fill="#775351" d="M0 3.3 H7 V1 L10.6 4 L7 7 V4.7 H0Z"/></svg> <b>0</b></div><div class="t" style="left:468.60px;top:294px;font-size:12px;line-height:12px;color:#775351;font-family:'Liberation Sans', sans-serif;font-weight:normal;"><b>0 bytes / 0 bytes</b></div><div class="t" style="left:468.60px;top:312px;font-size:12px;line-height:12px;color:#775351;font-family:'Liberation Sans', sans-serif;font-weight:normal;"><b>0</b> <svg width="11" height="8" viewBox="0 0 11 8" style="display:inline-block;vertical-align:0px;margin:0 1px"><path fill="#775351" d="M0 3.3 H7 V1 L10.6 4 L7 7 V4.7 H0Z"/></svg> <b>0</b> (0 bytes)</div><div class="t" style="right:419.5px;top:276px;font-size:12px;line-height:12px;color:#728e9b;font-family:'Liberation Sans', sans-serif">5 min</div><div class="t" style="right:419.5px;top:294px;font-size:12px;line-height:12px;color:#728e9b;font-family:'Liberation Sans', sans-serif">5 min</div><div class="t" style="right:419.5px;top:312px;font-size:12px;line-height:12px;color:#728e9b;font-family:'Liberation Sans', sans-serif">5 min</div><svg class="i" style="left:380px;top:342px;overflow:visible" width="13" height="9.7" viewBox="0 0 16 12.5"><path fill="#aabbc3" d="M0 6.9 L2.3 4.6 L5.6 7.9 L13.7 0 L16 2.3 L5.6 12.5 Z"/></svg><div class="t" style="left:399.60px;top:339px;font-size:15px;line-height:15px;color:#775351;font-family:'Liberation Sans', sans-serif;font-weight:normal;-webkit-text-stroke:0.5px #775351;">0</div><svg class="i" style="left:419.5px;top:340.4px;" width="13" height="13" viewBox="0 0 13 13"><g stroke="#aabbc3" stroke-width="2.8" stroke-linecap="round"><path d="M6.5 1.5 V11.5 M2.2 4 L10.8 9 M2.2 9 L10.8 4"/></g></svg><div class="t" style="left:437.50px;top:339px;font-size:15px;line-height:15px;color:#775351;font-family:'Liberation Sans', sans-serif;font-weight:normal;-webkit-text-stroke:0.5px #775351;">0</div><svg class="i" style="left:457px;top:340.2px;" width="13" height="13" viewBox="0 0 13 13"><circle cx="6.5" cy="6.5" r="6.4" fill="#aabbc3"/><path fill="#e3e8eb" d="M6.5 2.6 L10.2 6.3 H8 V10.3 H5 V6.3 H2.8 Z"/></svg><div class="t" style="left:474.70px;top:339px;font-size:15px;line-height:15px;color:#775351;font-family:'Liberation Sans', sans-serif;font-weight:normal;-webkit-text-stroke:0.5px #775351;">0</div><svg class="i" style="left:494px;top:340px;" width="13" height="13" viewBox="0 0 13 13"><circle cx="6.5" cy="6.5" r="6.4" fill="#aabbc3"/><rect x="5.6" y="2.6" width="1.8" height="5.2" fill="#e3e8eb"/><rect x="5.6" y="8.8" width="1.8" height="1.7" fill="#e3e8eb"/></svg><div class="t" style="left:512.00px;top:339px;font-size:15px;line-height:15px;color:#775351;font-family:'Liberation Sans', sans-serif;font-weight:normal;-webkit-text-stroke:0.5px #775351;">0</div><svg class="i" style="left:530px;top:342px;" width="8" height="12" viewBox="0 0 8 12"><path fill="none" stroke="#aabbc3" stroke-width="2" d="M1.3 3.6 Q1.3 1 4 1 Q6.7 1 6.7 3.4 Q6.7 4.9 5.3 5.7 Q4 6.5 4 8"/><rect x="3" y="9.2" width="2" height="2" fill="#aabbc3"/></svg><div class="t" style="left:543.10px;top:339px;font-size:15px;line-height:15px;color:#775351;font-family:'Liberation Sans', sans-serif;font-weight:normal;-webkit-text-stroke:0.5px #775351;">0</div>
<div class="pg" style="left:622px;top:434px"><div class="pgh"></div><div class="pgs"></div><div class="row" style="top:66px;background:#f4f6f7"></div><div class="rb" style="top:84px"></div><div class="row" style="top:85px"></div><div class="rb" style="top:103px"></div><div class="row" style="top:104px;background:#f4f6f7"></div><div class="rb" style="top:122px"></div><div class="pgf"></div></div><svg class="i" style="left:633.3px;top:443px;overflow:visible" width="15.4" height="12.2" viewBox="0 0 16 12.5"><path fill="#1a9964" d="M0 6.9 L2.3 4.6 L5.6 7.9 L13.7 0 L16 2.3 L5.6 12.5 Z"/></svg><div class="t" style="left:655.50px;top:443px;font-size:13.5px;line-height:13.5px;color:#262626;font-family:'Liberation Sans', sans-serif;font-weight:normal;">ABCD</div><svg class="i" style="left:626.9px;top:466.3px;" width="24.0" height="24.0" viewBox="0 0 24 24"><g fill="none" stroke="#aabbc3" stroke-width="1.1"><circle cx="12" cy="12" r="5.9"/><circle cx="12" cy="12" r="3.6"/></g><circle cx="12" cy="12" r="1.7" fill="#aabbc3"/></svg><div class="t" style="left:650.30px;top:470px;font-size:15px;line-height:15px;color:#775351;font-family:'Liberation Sans', sans-serif;font-weight:normal;-webkit-text-stroke:0.5px #775351;">0</div><svg class="i" style="left:665.7px;top:466.3px;" width="24.0" height="24.0" viewBox="0 0 24 24"><g fill="none" stroke="#aabbc3" stroke-width="1.1"><path d="M9.5 6.6 A6 6 0 0 1 17.6 14.5 M15.4 16.8 A6 6 0 0 1 7.2 8.4"/><path d="M10.5 9 A3.6 3.6 0 0 1 15.4 13.1 M13.5 15.3 A3.6 3.6 0 0 1 8.8 10.8"/><path d="M6 6 L18.5 19" stroke-width="1.3"/></g><path d="M10.6 10.8 L13.2 13.5 A1.7 1.7 0 0 1 10.6 10.8z" fill="#aabbc3"/></svg><div class="t" style="left:689.50px;top:470px;font-size:15px;line-height:15px;color:#775351;font-family:'Liberation Sans', sans-serif;font-weight:normal;-webkit-text-stroke:0.5px #775351;">0</div><svg class="i" style="left:708.9px;top:471.9px;" width="11.7" height="12.7" viewBox="0 0 11.7 12.7"><path fill="#aabbc3" d="M0 0 L11.7 6.35 L0 12.7 Z"/></svg><div class="t" style="left:725.70px;top:470px;font-size:15px;line-height:15px;color:#775351;font-family:'Liberation Sans', sans-serif;font-weight:normal;-webkit-text-stroke:0.5px #775351;">0</div><svg class="i" style="left:745px;top:471.9px;" width="13" height="13" viewBox="0 0 13 13"><rect fill="#d18686" width="13" height="13" rx="0"/></svg><div class="t" style="left:762.60px;top:470px;font-size:15px;line-height:15px;color:#775351;font-family:'Liberation Sans', sans-serif;font-weight:normal;-webkit-text-stroke:0.5px #775351;">2</div><svg class="i" style="left:782px;top:471.6px;" width="16" height="13" viewBox="0 0 16 13"><path fill="#aabbc3" d="M7.65 0.3 Q8.1 0.3 8.4 0.8 L15.1 11.8 Q15.4 12.5 14.6 12.5 H0.7 Q-0.1 12.5 0.2 11.8 L6.9 0.8 Q7.2 0.3 7.65 0.3Z M6.9 4 V8.2 H8.4 V4Z M6.9 9.3 V10.8 H8.4 V9.3Z" fill-rule="evenodd"/></svg><div class="t" style="left:802.00px;top:470px;font-size:15px;line-height:15px;color:#775351;font-family:'Liberation Sans', sans-serif;font-weight:normal;-webkit-text-stroke:0.5px #775351;">0</div><svg class="i" style="left:822.2px;top:471.2px;" width="14" height="14" viewBox="0 0 14 14"><path fill="#aabbc3" d="M5.2 0.3 H9.6 L8.2 4 H11 L6.6 13.7 L7.4 7.5 H4.6 Z"/><path stroke="#aabbc3" stroke-width="1.2" d="M0.6 0.6 L13.3 13.4"/><path stroke="#e3e8eb" stroke-width="1" d="M1.5 -0.5 L14.2 12.3"/><path stroke="#aabbc3" stroke-width="1.2" d="M0.6 0.6 L13.3 13.4"/></svg><div class="t" style="left:841.30px;top:470px;font-size:15px;line-height:15px;color:#775351;font-family:'Liberation Sans', sans-serif;font-weight:normal;-webkit-text-stroke:0.5px #775351;">0</div><div class="t" style="left:632.30px;top:504px;font-size:14px;line-height:14px;color:#262626;font-family:'Liberation Serif', serif;font-weight:normal;-webkit-text-stroke:0.05px #262626;">Queued</div><div class="t" style="left:632.30px;top:523px;font-size:14px;line-height:14px;color:#262626;font-family:'Liberation Serif', serif;font-weight:normal;-webkit-text-stroke:0.05px #262626;">In</div><div class="t" style="left:632.30px;top:541px;font-size:14px;line-height:14px;color:#262626;font-family:'Liberation Serif', serif;font-weight:normal;-webkit-text-stroke:0.05px #262626;">Read/Write</div><div class="t" style="left:632.30px;top:559px;font-size:14px;line-height:14px;color:#262626;font-family:'Liberation Serif', serif;font-weight:normal;-webkit-text-stroke:0.05px #262626;">Out</div><div class="t" style="left:721.60px;top:505px;font-size:12px;line-height:12px;color:#775351;font-family:'Liberation Sans', sans-serif;font-weight:normal;"><b>0</b> (0 bytes)</div><div class="t" style="left:721.60px;top:524px;font-size:12px;line-height:12px;color:#775351;font-family:'Liberation Sans', sans-serif;font-weight:normal;"><b>0</b> (0 bytes) <svg width="11" height="8" viewBox="0 0 11 8" style="display:inline-block;vertical-align:0px;margin:0 1px"><path fill="#775351" d="M0 3.3 H7 V1 L10.6 4 L7 7 V4.7 H0Z"/></svg> <b>0</b></div><div class="t" style="left:721.60px;top:542px;font-size:12px;line-height:12px;color:#775351;font-family:'Liberation Sans', sans-serif;font-weight:normal;"><b>0 bytes / 0 bytes</b></div><div class="t" style="left:721.60px;top:560px;font-size:12px;line-height:12px;color:#775351;font-family:'Liberation Sans', sans-serif;font-weight:normal;"><b>0</b> <svg width="11" height="8" viewBox="0 0 11 8" style="display:inline-block;vertical-align:0px;margin:0 1px"><path fill="#775351" d="M0 3.3 H7 V1 L10.6 4 L7 7 V4.7 H0Z"/></svg> <b>0</b> (0 bytes)</div><div class="t" style="right:166.5px;top:524px;font-size:12px;line-height:12px;color:#728e9b;font-family:'Liberation Sans', sans-serif">5 min</div><div class="t" style="right:166.5px;top:542px;font-size:12px;line-height:12px;color:#728e9b;font-family:'Liberation Sans', sans-serif">5 min</div><div class="t" style="right:166.5px;top:560px;font-size:12px;line-height:12px;color:#728e9b;font-family:'Liberation Sans', sans-serif">5 min</div><svg class="i" style="left:633px;top:590px;overflow:visible" width="13" height="9.7" viewBox="0 0 16 12.5"><path fill="#aabbc3" d="M0 6.9 L2.3 4.6 L5.6 7.9 L13.7 0 L16 2.3 L5.6 12.5 Z"/></svg><div class="t" style="left:652.60px;top:587px;font-size:15px;line-height:15px;color:#775351;font-family:'Liberation Sans', sans-serif;font-weight:normal;-webkit-text-stroke:0.5px #775351;">0</div><svg class="i" style="left:672.5px;top:588.4px;" width="13" height="13" viewBox="0 0 13 13"><g stroke="#aabbc3" stroke-width="2.8" stroke-linecap="round"><path d="M6.5 1.5 V11.5 M2.2 4 L10.8 9 M2.2 9 L10.8 4"/></g></svg><div class="t" style="left:690.50px;top:587px;font-size:15px;line-height:15px;color:#775351;font-family:'Liberation Sans', sans-serif;font-weight:normal;-webkit-text-stroke:0.5px #775351;">0</div><svg class="i" style="left:710px;top:588.2px;" width="13" height="13" viewBox="0 0 13 13"><circle cx="6.5" cy="6.5" r="6.4" fill="#aabbc3"/><path fill="#e3e8eb" d="M6.5 2.6 L10.2 6.3 H8 V10.3 H5 V6.3 H2.8 Z"/></svg><div class="t" style="left:727.70px;top:587px;font-size:15px;line-height:15px;color:#775351;font-family:'Liberation Sans', sans-serif;font-weight:normal;-webkit-text-stroke:0.5px #775351;">0</div><svg class="i" style="left:747px;top:588px;" width="13" height="13" viewBox="0 0 13 13"><circle cx="6.5" cy="6.5" r="6.4" fill="#aabbc3"/><rect x="5.6" y="2.6" width="1.8" height="5.2" fill="#e3e8eb"/><rect x="5.6" y="8.8" width="1.8" height="1.7" fill="#e3e8eb"/></svg><div class="t" style="left:765.00px;top:587px;font-size:15px;line-height:15px;color:#775351;font-family:'Liberation Sans', sans-serif;font-weight:normal;-webkit-text-stroke:0.5px #775351;">0</div><svg class="i" style="left:783px;top:590px;" width="8" height="12" viewBox="0 0 8 12"><path fill="none" stroke="#aabbc3" stroke-width="2" d="M1.3 3.6 Q1.3 1 4 1 Q6.7 1 6.7 3.4 Q6.7 4.9 5.3 5.7 Q4 6.5 4 8"/><rect x="3" y="9.2" width="2" height="2" fill="#aabbc3"/></svg><div class="t" style="left:796.10px;top:587px;font-size:15px;line-height:15px;color:#775351;font-family:'Liberation Sans', sans-serif;font-weight:normal;-webkit-text-stroke:0.5px #775351;">0</div>
<div id="bc"></div>
<div class="t" style="left:15.20px;top:660px;font-size:12.3px;line-height:12.3px;color:#004849;font-family:'Liberation Sans', sans-serif;font-weight:bold;">NiFi Flow</div>
<svg class="i" style="left:0px;top:670px;" width="10" height="10" viewBox="0 0 10 10"><path fill="#858585" d="M0 4.8 Q0.9 9 4.3 10 H0 Z"/></svg>
</body></html>
